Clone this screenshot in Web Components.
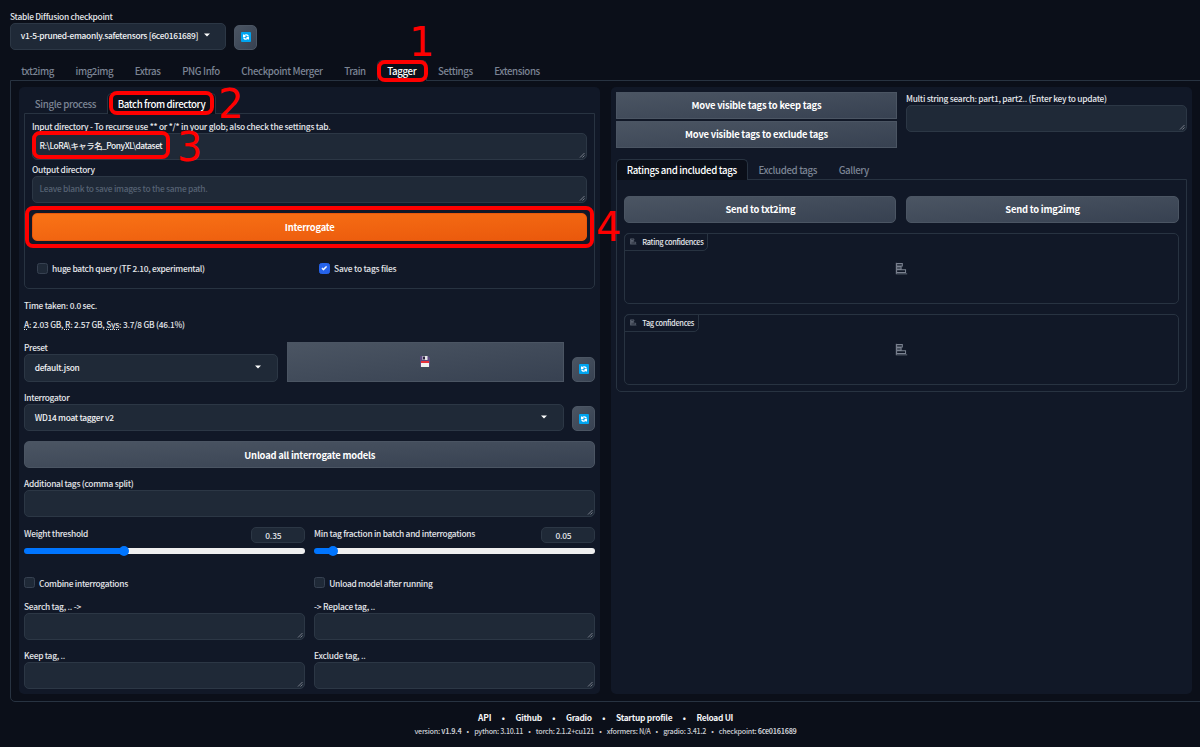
<!DOCTYPE html>
<html lang="en">
<head>
<meta charset="utf-8">
<title>Stable Diffusion</title>
<style>
  html, body {
    margin: 0;
    height: 747px;
    overflow: hidden;
    background: #0b0f19;
  }
</style>
</head>
<body>
<sd-app></sd-app>

<script>
class BaseElement extends HTMLElement {
  constructor () {
    super()
    this.shadow = this.attachShadow({ mode: 'open' })
  }

  connectedCallback () {
    this.render()
  }
}

class SdButton extends BaseElement {
  render () {
    this.shadow.innerHTML =
      /* html */
      `
      <style>
        :host {
          display: flex;
          align-items: center;
          justify-content: center;
          box-sizing: border-box;
          height: 27px;
          border: 1px solid #4b5563;
          border-radius: 5px;
          background: linear-gradient(to bottom right, #4b5563, #374151);
          color: #fff;
          font-size: 9.4px;
          font-weight: 700;
          line-height: 14px;
        }
        :host([square]) { border-radius: 0; }
        :host([primary]) {
          border-color: #ea580c;
          background: linear-gradient(to bottom right, #f97316, #ea580c);
        }
        :host([tool]) {
          flex: none;
          width: 23px;
          height: 25px;
        }
      </style>
      <slot></slot>
      `
  }
}

class SdRefresh extends BaseElement {
  render () {
    this.shadow.innerHTML =
      /* html */
      `
      <style>
        :host { display: block; width: 10px; height: 10px; }
        svg { display: block; }
      </style>
      <svg width="10" height="10" viewBox="0 0 20 20">
        <rect width="20" height="20" rx="2" fill="#00a4ef"/>
        <path d="M4 4v6h6L8 8c2-1.600 4-1 5 1h3C15 4.500 10 3 6 6zM16 16v-6h-6l2 2c-2 1.600-4 1-5-1H4c1 4.500 6 6 10 3z" fill="#fff"/>
      </svg>
      `
  }
}

class SdFloppy extends BaseElement {
  render () {
    this.shadow.innerHTML =
      /* html */
      `
      <style>
        :host { display: block; width: 10px; height: 11px; }
        svg { display: block; }
      </style>
      <svg width="10" height="11" viewBox="0 0 20 22">
        <path d="M0 2q0-2 2-2h14l4 4v16q0 2-2 2H2q-2 0-2-2z" fill="#5b4a80"/>
        <path d="M5 0h10v8H5z" fill="#e6e6e6"/>
        <path d="M6 1h4v6H6z" fill="#2b2140"/>
        <path d="M2 10h16v12H2z" fill="#f1f1f1"/>
        <path d="M2 10h16v4H2z" fill="#e8323c"/>
      </svg>
      `
  }
}

class SdField extends BaseElement {
  render () {
    this.shadow.innerHTML =
      /* html */
      `
      <style>
        :host {
          display: block;
          flex: 1;
          min-width: 0;
          color: #e5e7eb;
          font-size: 8.4px;
        }
        .label {
          height: 13px;
          line-height: 12px;
        }
        .box {
          position: relative;
          display: flex;
          align-items: center;
          box-sizing: border-box;
          height: var(--box-height, 27px);
          padding: 0 6.500px 2px;
          border: 1px solid #2c3745;
          border-radius: 5px;
          background: #1f2937;
          color: #f3f4f6;
          line-height: 14px;
        }
        :host([placeholder]) .box { color: #566273; }
        :host([select]) .box {
          justify-content: space-between;
          padding: 0 15.500px 2px 9.700px;
        }
        .grip {
          position: absolute;
          right: 1px;
          bottom: 1px;
        }
        .caret { display: none; }
        :host([select]) .grip { display: none; }
        :host([select]) .caret { display: block; }
      </style>
      <div class="label"><slot name="label"></slot></div>
      <div class="box">
        <slot></slot>
        <svg class="caret" width="6" height="4" viewBox="0 0 6 4"><path d="M0 .5h6L3 3.500z" fill="#fff"/></svg>
        <svg class="grip" width="6" height="6" viewBox="0 0 6 6"><path d="M1 5.500L5.500 1M3.500 5.500l2-2" stroke="#8d939c" stroke-width=".8"/></svg>
      </div>
      `
  }
}

class SdCheck extends BaseElement {
  render () {
    this.shadow.innerHTML =
      /* html */
      `
      <style>
        :host {
          display: flex;
          flex: 1;
          align-items: center;
          gap: 4.600px;
          height: 14px;
          color: #e5e7eb;
          font-size: 8.4px;
          line-height: 14px;
        }
        i {
          box-sizing: border-box;
          width: 10.500px;
          height: 10.500px;
          border: 1px solid #374151;
          border-radius: 2.500px;
          background: #1f2937;
        }
        svg { display: none; }
        :host([checked]) i {
          border-color: #2563eb;
          background: #2563eb;
        }
        :host([checked]) svg { display: block; }
      </style>
      <i><svg viewBox="0 0 16 16"><path d="M12.2 4.800a1 1 0 0 1 0 1.400l-5 5a1 1 0 0 1-1.400 0l-2-2a1 1 0 0 1 1.400-1.400L6.500 9.100l4.300-4.300a1 1 0 0 1 1.400 0z" fill="#fff" stroke="#fff"/></svg></i>
      <slot></slot>
      `
  }
}

class SdSlider extends BaseElement {
  render () {
    const at = this.getAttribute('at')
    this.shadow.innerHTML =
      /* html */
      `
      <style>
        :host {
          display: block;
          flex: 1;
          color: #e5e7eb;
          font-size: 8.4px;
        }
        .head {
          display: flex;
          justify-content: space-between;
          align-items: flex-start;
          height: 18px;
          line-height: 13px;
        }
        .number {
          box-sizing: border-box;
          width: 54px;
          height: 16px;
          padding-left: 13px;
          border: 1px solid #2c3745;
          border-radius: 5px;
          background: #1f2937;
          line-height: 14px;
        }
        .track {
          position: relative;
          height: 6px;
          margin-top: 3px;
          border-radius: 3px;
          background: linear-gradient(to right, #0075ff ${at}px, #efefef ${at}px);
        }
        .thumb {
          position: absolute;
          left: ${at - 5}px;
          top: -2px;
          width: 10px;
          height: 10px;
          border-radius: 50%;
          background: #0075ff;
        }
      </style>
      <div class="head">
        <slot></slot>
        <div class="number"><slot name="value"></slot></div>
      </div>
      <div class="track"><div class="thumb"></div></div>
      `
  }
}

class SdTab extends BaseElement {
  render () {
    this.shadow.innerHTML =
      /* html */
      `
      <style>
        :host {
          box-sizing: border-box;
          height: 21px;
          padding: 0 9.800px;
          border: 1px solid transparent;
          border-bottom: 0;
          border-radius: 5px 5px 0 0;
          color: #7b8494;
          font-size: 9.7px;
          line-height: 20px;
          display: block;
        }
        :host([selected]) {
          border-color: #283341;
          background: #0b0f19;
          color: #fff;
        }
      </style>
      <slot></slot>
      `
  }
}

class SdTabs extends BaseElement {
  render () {
    this.shadow.innerHTML =
      /* html */
      `
      <style>
        :host { display: block; }
        .nav {
          display: flex;
          height: 20px;
        }
        .panel {
          box-sizing: border-box;
          height: var(--panel-height);
          padding: var(--panel-padding);
          border: 1px solid #283341;
          border-radius: 0 0 5px 5px;
        }
      </style>
      <div class="nav"><slot name="tab"></slot></div>
      <div class="panel"><slot></slot></div>
      `
  }
}

class SdPlot extends BaseElement {
  render () {
    const chart = '<path d="M4 2H2v28h28v-2H4z"/><path d="M4 4h14v6H4zM4 12h11v5H4zM4 19h22v7H4z" fill="none" stroke="currentColor" stroke-width="2.500"/>'
    this.shadow.innerHTML =
      /* html */
      `
      <style>
        :host {
          position: relative;
          display: flex;
          align-items: center;
          justify-content: center;
          box-sizing: border-box;
          height: 71px;
          border: 1px solid #283341;
          border-radius: 5px;
          color: #7b8290;
        }
        svg { display: block; fill: currentColor; }
        .label {
          position: absolute;
          top: -1px;
          left: -1px;
          display: flex;
          align-items: center;
          gap: 5px;
          box-sizing: border-box;
          height: 18px;
          padding: 0 4px 0 5px;
          border: 1px solid #283341;
          border-radius: 5px 0 5px 0;
          color: #e5e7eb;
          font-size: 7.400px;
          line-height: 14px;
        }
        .label svg { color: #7b8290; }
      </style>
      <div class="label">
        <svg width="7" height="7" viewBox="0 0 32 32">${chart}</svg>
        <slot></slot>
      </div>
      <svg width="13" height="13" viewBox="0 0 32 32">${chart}</svg>
      `
  }
}

class SdFooter extends BaseElement {
  render () {
    this.shadow.innerHTML =
      /* html */
      `
      <style>
        :host {
          display: block;
          padding-top: 8px;
          color: #f3f4f6;
        }
        div {
          display: flex;
          justify-content: center;
          width: 1211px;
          height: 14px;
          line-height: 14px;
        }
        .links { font-size: 8.400px; font-weight: 700; }
        .versions { font-size: 7.200px; color: #c9ccd1; }
        i {
          width: 24.200px;
          font-style: normal;
          text-align: center;
        }
        .versions i { width: 12.700px; }
      </style>
      <div class="links">
        <ui-text w="13.3">API</ui-text><i>•</i><ui-text w="26.3">Github</ui-text><i>•</i><ui-text w="25.8">Gradio</ui-text><i>•</i><ui-text w="56.3">Startup profile</ui-text><i>•</i><ui-text w="36.6">Reload UI</ui-text>
      </div>
      <div class="versions">
        <ui-text w="47">version: <b>v1.9.4</b></ui-text><i>•</i><ui-text w="49">python: 3.10.11</ui-text><i>•</i><ui-text w="58.3">torch: 2.1.2+cu121</ui-text><i>•</i><ui-text w="43.7">xformers: N/A</ui-text><i>•</i><ui-text w="43">gradio: 3.41.2</ui-text><i>•</i><ui-text w="77.7">checkpoint: <b>6ce0161689</b></ui-text>
      </div>
      `
  }
}

// red step marker drawn over the page: a frame and its number
class StepMark extends BaseElement {
  render () {
    const [x, y, w, h] = this.getAttribute('frame').split(' ')
    const [nx, ny] = this.getAttribute('number').split(' ')
    this.shadow.innerHTML =
      /* html */
      `
      <style>
        :host { color: #f00; }
        .frame {
          position: absolute;
          left: ${x}px;
          top: ${y}px;
          box-sizing: border-box;
          width: ${w}px;
          height: ${h}px;
          border: 4px solid #f00;
          border-radius: 8px;
        }
        .number {
          position: absolute;
          left: ${nx}px;
          top: ${ny}px;
          font: 40px/40px "DejaVu Sans", sans-serif;
        }
      </style>
      <div class="frame"></div>
      <div class="number"><slot></slot></div>
      `
  }
}

class TaggerLeft extends BaseElement {
  render () {
    this.shadow.innerHTML =
      /* html */
      `
      <style>
        :host {
          display: block;
          box-sizing: border-box;
          width: 581.400px;
          height: 607px;
          padding: 6px 5px 0;
          border-radius: 5px;
          background: #111827;
        }
        sd-tabs {
          --panel-height: 176px;
          --panel-padding: 6px 7px 0;
        }
        .row { display: flex; gap: 8.800px; }
        .out { margin-top: 3px; }
        .go { margin-top: 10px; height: 28px; }
        .checks { padding: 20.500px 5px 0; gap: 0; }
        .checks sd-check:first-child { flex: none; width: 282px; }
        .info {
          color: #e5e7eb;
          font-size: 8.300px;
          line-height: 14px;
        }
        .time { margin-top: 9.500px; }
        .mem { margin: 5px 0 9.500px; }
        u { text-decoration: underline dotted; text-underline-offset: 1px; }
        .preset { --box-height: 28px; }
        .preset .save { flex: none; width: 277px; height: 40px; }
        .preset, .model { align-items: flex-end; }
        .model { margin-top: 9.200px; }
        .unload { margin: 10px 0 9px; }
        .sliders { margin-top: 9.500px; }
        .options { margin-top: 22px; }
        .tags { margin-top: 10px; }
        .tags + .tags { margin-top: 9.300px; }
      </style>
      <sd-tabs>
        <sd-tab slot="tab"><ui-text w="61.3">Single process</ui-text></sd-tab>
        <sd-tab slot="tab" selected><ui-text w="87.6">Batch from directory</ui-text></sd-tab>
        <sd-field>
          <ui-text slot="label" w="298.500">Input directory - To recurse use ** or */* in your glob; also check the settings tab.</ui-text>
          <ui-text w="122.7">R:\\LoRA\\キャラ名_PonyXL\\dataset</ui-text>
        </sd-field>
        <sd-field class="out" placeholder>
          <ui-text slot="label" w="62.7">Output directory</ui-text>
          <ui-text w="168">Leave blank to save images to the same path.</ui-text>
        </sd-field>
        <sd-button class="go" primary><ui-text w="49.7">Interrogate</ui-text></sd-button>
        <div class="row checks">
          <sd-check><ui-text w="152.6">huge batch query (TF 2.10, experimental)</ui-text></sd-check>
          <sd-check checked><ui-text w="62.3">Save to tags files</ui-text></sd-check>
        </div>
      </sd-tabs>
      <div class="info time"><ui-text w="73">Time taken: 0.0 sec.</ui-text></div>
      <div class="info mem"><ui-text w="160.7"><u>A</u>: 2.03 GB, <u>R</u>: 2.57 GB, <u>Sys</u>: 3.7/8 GB (46.1%)</ui-text></div>
      <div class="row preset">
        <sd-field select>
          <ui-text slot="label" w="23.600">Preset</ui-text>
          <ui-text w="44.8">default.json</ui-text>
        </sd-field>
        <sd-button class="save" square><sd-floppy></sd-floppy></sd-button>
        <sd-button tool><sd-refresh></sd-refresh></sd-button>
      </div>
      <div class="row model">
        <sd-field select>
          <ui-text slot="label" w="45.3">Interrogator</ui-text>
          <ui-text w="79">WD14 moat tagger v2</ui-text>
        </sd-field>
        <sd-button tool><sd-refresh></sd-refresh></sd-button>
      </div>
      <sd-button class="unload"><ui-text w="130.8">Unload all interrogate models</ui-text></sd-button>
      <sd-field><ui-text slot="label" w="109.5">Additional tags (comma split)</ui-text></sd-field>
      <div class="row sliders">
        <sd-slider at="99.5"><ui-text w="64">Weight threshold</ui-text><ui-text slot="value" w="16">0.35</ui-text></sd-slider>
        <sd-slider at="18.5"><ui-text w="161">Min tag fraction in batch and interrogations</ui-text><ui-text slot="value" w="16">0.05</ui-text></sd-slider>
      </div>
      <div class="row options">
        <sd-check><ui-text w="88.8">Combine interrogations</ui-text></sd-check>
        <sd-check><ui-text w="103.3">Unload model after running</ui-text></sd-check>
      </div>
      <div class="row tags">
        <sd-field><ui-text slot="label" w="57">Search tag, .. -&gt;</ui-text></sd-field>
        <sd-field><ui-text slot="label" w="61">-&gt; Replace tag, ..</ui-text></sd-field>
      </div>
      <div class="row tags">
        <sd-field><ui-text slot="label" w="41">Keep tag, ..</ui-text></sd-field>
        <sd-field><ui-text slot="label" w="51.3">Exclude tag, ..</ui-text></sd-field>
      </div>
      `
  }
}

class TaggerRight extends BaseElement {
  render () {
    this.shadow.innerHTML =
      /* html */
      `
      <style>
        :host {
          display: block;
          box-sizing: border-box;
          width: 581px;
          height: 607px;
          padding: 5px 5px 0;
          border-radius: 5px;
          background: #111827;
        }
        .row { display: flex; gap: 9px; }
        .top { height: 67px; }
        .moves {
          display: grid;
          flex: 1;
          gap: 2px;
          align-content: start;
        }
        .moves sd-button { height: 27px; }
        sd-tabs {
          --panel-height: 213px;
          --panel-padding: 16px 7.300px 0;
        }
        .send { gap: 10px; }
        .send sd-button { flex: 1; }
        sd-plot { margin-top: 10px; }
      </style>
      <div class="row top">
        <div class="moves">
          <sd-button square><ui-text w="129.9">Move visible tags to keep tags</ui-text></sd-button>
          <sd-button square><ui-text w="142.8">Move visible tags to exclude tags</ui-text></sd-button>
        </div>
        <sd-field><ui-text slot="label" w="200.8">Multi string search: part1, part2.. (Enter key to update)</ui-text></sd-field>
      </div>
      <sd-tabs>
        <sd-tab slot="tab" selected><ui-text w="110">Ratings and included tags</ui-text></sd-tab>
        <sd-tab slot="tab"><ui-text w="58.7">Excluded tags</ui-text></sd-tab>
        <sd-tab slot="tab"><ui-text w="30.3">Gallery</ui-text></sd-tab>
        <div class="row send">
          <sd-button><ui-text w="69.8">Send to txt2img</ui-text></sd-button>
          <sd-button><ui-text w="74.6">Send to img2img</ui-text></sd-button>
        </div>
        <sd-plot><ui-text w="61.2">Rating confidences</ui-text></sd-plot>
        <sd-plot><ui-text w="51.8">Tag confidences</ui-text></sd-plot>
      </sd-tabs>
      `
  }
}

class SdApp extends BaseElement {
  render () {
    this.shadow.innerHTML =
      /* html */
      `
      <style>
        :host {
          position: relative;
          display: block;
          width: 1200px;
          height: 747px;
          overflow: hidden;
          font-family: "Noto Sans CJK JP", "Open Sans", sans-serif;
          font-weight: 500;
        }
        header {
          display: flex;
          align-items: flex-end;
          gap: 8.400px;
          height: 39.600px;
          padding: 10px 0 0 10px;
        }
        .checkpoint { flex: none; width: 216px; }
        nav {
          display: flex;
          height: 20px;
          margin-top: 10.400px;
          padding-left: 10.500px;
        }
        main {
          display: flex;
          gap: 10.600px;
          box-sizing: border-box;
          width: 1200px;
          height: 622px;
          margin-left: 10px;
          padding: 6px 0 0 8px;
          border: 1px solid #283341;
          border-radius: 0 0 0 5px;
        }
      </style>
      <header>
        <sd-field class="checkpoint" select>
          <ui-text slot="label" w="102.5">Stable Diffusion checkpoint</ui-text>
          <ui-text w="177.6">v1-5-pruned-emaonly.safetensors [6ce0161689]</ui-text>
        </sd-field>
        <sd-button tool><sd-refresh></sd-refresh></sd-button>
      </header>
      <nav>
        <sd-tab><ui-text w="32.7">txt2img</ui-text></sd-tab>
        <sd-tab><ui-text w="37.6">img2img</ui-text></sd-tab>
        <sd-tab><ui-text w="25.800">Extras</ui-text></sd-tab>
        <sd-tab><ui-text w="37.6">PNG Info</ui-text></sd-tab>
        <sd-tab><ui-text w="81.3">Checkpoint Merger</ui-text></sd-tab>
        <sd-tab><ui-text w="21.5">Train</ui-text></sd-tab>
        <sd-tab selected><ui-text w="29">Tagger</ui-text></sd-tab>
        <sd-tab><ui-text w="34.8">Settings</ui-text></sd-tab>
        <sd-tab><ui-text w="45.5">Extensions</ui-text></sd-tab>
      </nav>
      <main>
        <tagger-left></tagger-left>
        <tagger-right></tagger-right>
      </main>
      <sd-footer></sd-footer>
      <step-mark frame="377 60 51 22" number="409 22">1</step-mark>
      <step-mark frame="109 91 105 24" number="218 84">2</step-mark>
      <step-mark frame="32 131 138 28" number="177 127">3</step-mark>
      <step-mark frame="25 206 569 42" number="596 207">4</step-mark>
      `
  }
}

// one line of text tracked to a given width
class UiText extends BaseElement {
  render () {
    this.shadow.innerHTML =
      /* html */
      `
      <style>
        :host {
          display: inline-block;
          white-space: nowrap;
        }
      </style>
      <slot></slot>
      `
    const width = Number(this.getAttribute('w'))
    const natural = this.getBoundingClientRect().width
    this.style.letterSpacing = (width - natural) / this.textContent.length + 'px'
    this.style.width = width + 'px'
  }
}

customElements.define('sd-app', SdApp)
customElements.define('tagger-left', TaggerLeft)
customElements.define('tagger-right', TaggerRight)
customElements.define('sd-tabs', SdTabs)
customElements.define('sd-tab', SdTab)
customElements.define('sd-field', SdField)
customElements.define('sd-check', SdCheck)
customElements.define('sd-slider', SdSlider)
customElements.define('sd-plot', SdPlot)
customElements.define('sd-button', SdButton)
customElements.define('sd-refresh', SdRefresh)
customElements.define('sd-floppy', SdFloppy)
customElements.define('sd-footer', SdFooter)
customElements.define('step-mark', StepMark)
customElements.define('ui-text', UiText)
</script>
</body>
</html>
